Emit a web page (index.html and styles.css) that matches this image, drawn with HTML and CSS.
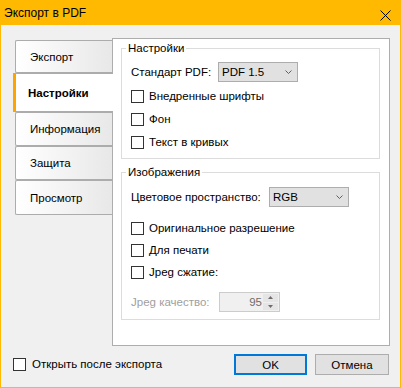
FILE: index.html
```html
<!DOCTYPE html>
<html lang="ru">
<head>
  <meta charset="UTF-8">
  <title>Экспорт в PDF</title>
  <link rel="stylesheet" href="styles.css">
</head>
<body>
  <div class="window">
    <!-- Title bar -->
    <div class="titlebar">
      <span class="title">Экспорт в PDF</span>
      <svg class="close" width="11" height="11" viewBox="0 0 11 11">
        <path d="M0.5 0.5 L10.5 10.5 M10.5 0.5 L0.5 10.5" stroke="#000" stroke-width="1" fill="none"/>
      </svg>
    </div>

    <div class="client">
      <div class="main">
        <!-- Side tabs -->
        <ul class="tabs">
          <li class="tab first">Экспорт</li>
          <li class="tab active">Настройки</li>
          <li class="tab">Информация</li>
          <li class="tab">Защита</li>
          <li class="tab last">Просмотр</li>
        </ul>

        <!-- Page content -->
        <div class="panel">
          <fieldset class="group settings">
            <legend>Настройки</legend>
            <div class="combo-row">
              <span class="caption caption-pdf">Стандарт PDF:</span>
              <div class="combo">
                <span>PDF 1.5</span>
                <svg width="7" height="4" viewBox="0 0 7 4"><path d="M0.5 0.5 L3.5 3.5 L6.5 0.5" stroke="#606060" fill="none"/></svg>
              </div>
            </div>
            <label class="check"><span class="box"></span>Внедренные шрифты</label>
            <label class="check"><span class="box"></span>Фон</label>
            <label class="check"><span class="box"></span>Текст в кривых</label>
          </fieldset>

          <fieldset class="group images">
            <legend>Изображения</legend>
            <div class="combo-row">
              <span class="caption caption-color">Цветовое пространство:</span>
              <div class="combo">
                <span>RGB</span>
                <svg width="7" height="4" viewBox="0 0 7 4"><path d="M0.5 0.5 L3.5 3.5 L6.5 0.5" stroke="#606060" fill="none"/></svg>
              </div>
            </div>
            <label class="check"><span class="box"></span>Оригинальное разрешение</label>
            <label class="check"><span class="box"></span>Для печати</label>
            <label class="check"><span class="box"></span>Jpeg сжатие:</label>
            <div class="spin-row">
              <span class="caption caption-quality">Jpeg качество:</span>
              <div class="spin">
                <span class="spin-value">95</span>
                <div class="spin-buttons">
                  <span class="spin-btn"><svg width="5" height="3" viewBox="0 0 5 3"><path d="M2.5 0 L5 3 L0 3 Z" fill="#6d6d6d"/></svg></span>
                  <span class="spin-btn"><svg width="5" height="3" viewBox="0 0 5 3"><path d="M0 0 L5 0 L2.5 3 Z" fill="#6d6d6d"/></svg></span>
                </div>
              </div>
            </div>
          </fieldset>
        </div>
      </div>

      <!-- Footer with buttons -->
      <div class="footer">
        <label class="check"><span class="box"></span>Открыть после экспорта</label>
        <div class="buttons">
          <button class="btn btn-ok">OK</button>
          <button class="btn btn-cancel">Отмена</button>
        </div>
      </div>
    </div>
  </div>
</body>
</html>
```

FILE: styles.css
```css
/* Global */
body {
  margin: 0;
  padding: 0;
  font-family: 'Liberation Sans', Arial, sans-serif;
  font-size: 11.5px;
  color: #000;
  background: #f0f0f0;
}

/* Window frame */
.window {
  width: 401px;
  height: 388px;
  box-sizing: border-box;
  border: 1px solid #ffb900;
  border-top: none;
  display: flex;
  flex-direction: column;
}

.titlebar {
  height: 25px;
  flex: none;
  background: #ffb900;
  display: flex;
  align-items: center;
  justify-content: space-between;
  padding: 0 9px 0 3px;
}

.title {
  font-size: 12px;
}

.close {
  margin-top: 6px;
}

.client {
  flex: 1;
  background: #f0f0f0;
}

.main {
  display: flex;
  padding: 13px 0 0 12px;
}

/* Side tabs */
.tabs {
  list-style: none;
  margin: 2px 0 0;
  padding: 0;
  width: 99px;
  display: flex;
  flex-direction: column;
}

.tab {
  height: 34px;
  box-sizing: border-box;
  margin-left: 2px;
  padding-left: 14px;
  border: 1px solid #acacac;
  border-right: none;
  border-radius: 2px 0 0 2px;
  background: linear-gradient(to right, #ffffff, #e8e8e8);
  display: flex;
  align-items: center;
}

.tab.first {
  height: 33px;
}

.tab.last {
  height: 35px;
}

.tab.active {
  height: 39px;
  margin-left: 0;
  margin-right: -1px;
  padding-left: 12px;
  border-left: 3px solid #ffa300;
  border-radius: 0;
  background: #fff;
  font-weight: bold;
  position: relative;
  z-index: 1;
}

/* Panel */
.panel {
  width: 278px;
  height: 308px;
  box-sizing: border-box;
  border: 1px solid #adadad;
  background: #fff;
  padding: 2px 9px 0 8px;
}

.group {
  margin: 0;
  border: 1px solid #dcdcdc;
  padding: 0 0 0 9px;
  display: flex;
  flex-direction: column;
  align-items: flex-start;
}

.group legend {
  margin-left: -5px;
  padding: 0 2px;
  line-height: 15px;
}

.settings {
  padding-bottom: 9px;
}

.images {
  margin-top: 6px;
  padding-bottom: 7px;
}

/* Combo rows */
.combo-row,
.spin-row {
  display: flex;
  align-items: center;
  height: 20px;
}

.settings .combo-row {
  margin: 6px 0 8px;
}

.images .combo-row {
  margin: 7px 0 15px;
}

.caption-pdf {
  width: 87px;
}

.caption-color {
  width: 138px;
}

.caption-quality {
  width: 88px;
  color: #a0a0a0;
}

.combo {
  width: 80px;
  height: 20px;
  box-sizing: border-box;
  border: 1px solid #adadad;
  background: #e1e1e1;
  padding: 0 5px 0 3px;
  display: flex;
  align-items: center;
  justify-content: space-between;
}

/* Checkboxes */
.check {
  display: flex;
  align-items: center;
  height: 13px;
  line-height: 13px;
}

.check .box {
  width: 13px;
  height: 13px;
  box-sizing: border-box;
  border: 1px solid #333;
  background: #fff;
  margin-right: 5px;
}

.settings .check + .check {
  margin-top: 10px;
}

.images .check + .check {
  margin-top: 9px;
}

/* Spin box */
.spin-row {
  margin-top: 13px;
}

.spin {
  width: 61px;
  height: 20px;
  box-sizing: border-box;
  border: 1px solid #cccccc;
  background: #f0f0f0;
  display: flex;
  align-items: center;
}

.spin-value {
  flex: 1;
  text-align: right;
  color: #6d6d6d;
  padding-right: 1px;
}

.spin-buttons {
  width: 15px;
  height: 16px;
  margin-right: 1px;
  display: flex;
  flex-direction: column;
  gap: 1px;
}

.spin-btn {
  flex: 1;
  background: #e5e5e5;
  display: flex;
  align-items: center;
  justify-content: center;
}

/* Footer */
.footer {
  display: flex;
  align-items: center;
  justify-content: space-between;
  margin-top: 8px;
  height: 21px;
  padding: 0 11px 0 12px;
}

.footer .box {
  margin-right: 6px;
}

.buttons {
  display: flex;
  gap: 8px;
}

.btn {
  height: 21px;
  box-sizing: border-box;
  font-family: inherit;
  font-size: 11.5px;
  color: #000;
  background: #e1e1e1;
  border: 1px solid #adadad;
  padding: 0;
}

.btn-ok {
  width: 73px;
  border: 2px solid #0078d7;
}

.btn-cancel {
  width: 74px;
}
```
